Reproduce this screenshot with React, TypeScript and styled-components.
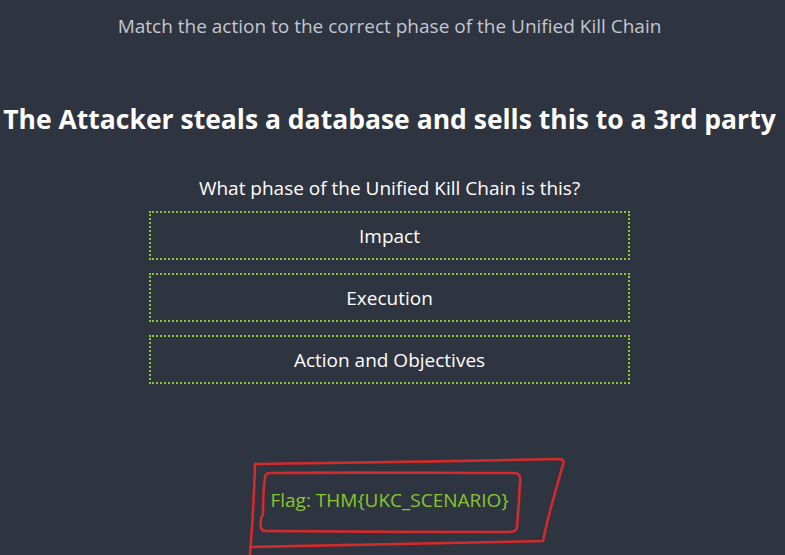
import React from "react";
import styled, { createGlobalStyle } from "styled-components";

const Global = createGlobalStyle`
  html, body { margin: 0; padding: 0; background: #2f3441; }
  body { font-family: "Open Sans", "Noto Sans", sans-serif; }
`;

const Page = styled.div`
  width: 785px;
  height: 555px;
  box-sizing: border-box;
  padding-right: 6px;
  background: #2f3441;
  display: flex;
  flex-direction: column;
  align-items: center;
  position: relative;
  overflow: hidden;
`;

const Subtitle = styled.div`
  margin-top: 13px;
  font-size: 19px;
  line-height: 27px;
  color: #c3c7ce;
  text-align: center;
  white-space: nowrap;
`;

const Title = styled.h1`
  margin: 61px 0 0;
  font-size: 26.5px;
  font-weight: 700;
  line-height: 36px;
  color: #ffffff;
  white-space: nowrap;
  text-align: center;
`;

const Question = styled.div`
  margin-top: 38px;
  font-size: 19px;
  line-height: 27px;
  color: #ffffff;
  text-align: center;
`;

const Options = styled.div`
  margin-top: 9px;
  width: 481px;
  display: flex;
  flex-direction: column;
  gap: 13px;
`;

const Option = styled.div`
  height: 49px;
  box-sizing: border-box;
  border: 2px dotted #8cc43a;
  display: flex;
  align-items: center;
  justify-content: center;
  font-size: 19px;
  color: #ffffff;
`;

const Flag = styled.div`
  margin-top: 103px;
  font-size: 19px;
  line-height: 27px;
  color: #88c62c;
`;

const Scribble = styled.svg`
  position: absolute;
  left: 0;
  top: 0;
  width: 785px;
  height: 555px;
  pointer-events: none;
`;

export default function App() {
  return (
    <Page>
      <Global />
      <Subtitle>Match the action to the correct phase of the Unified Kill Chain</Subtitle>
      <Title>The Attacker steals a database and sells this to a 3rd party</Title>
      <Question>What phase of the Unified Kill Chain is this?</Question>
      <Options>
        <Option>Impact</Option>
        <Option>Execution</Option>
        <Option>Action and Objectives</Option>
      </Options>
      <Flag>Flag: THM{"{"}UKC_SCENARIO{"}"}</Flag>
      <Scribble viewBox="0 0 785 555">
        <g fill="none" stroke="#d12b2b" strokeWidth="2.6" strokeLinecap="round" strokeLinejoin="round">
          <path d="M255 464 C 350 463, 460 461, 560 459 C 565 460, 564 463, 562 468 C 556 490, 548 515, 543 541 C 450 543, 350 545, 250 547" />
          <path d="M255 464 C 254 500, 252 530, 250 555" />
          <path d="M270 473 C 350 472, 440 473, 514 473 C 520 473, 521 477, 520 484 C 519 500, 518 515, 517 527 C 517 531, 514 532, 508 532 C 430 532, 340 532, 266 531 C 260 531, 260 526, 261 520 C 261 516, 263 516, 263 514 C 263 500, 264 485, 265 478 C 265 474, 267 473, 270 473" />
        </g>
      </Scribble>
    </Page>
  );
}
